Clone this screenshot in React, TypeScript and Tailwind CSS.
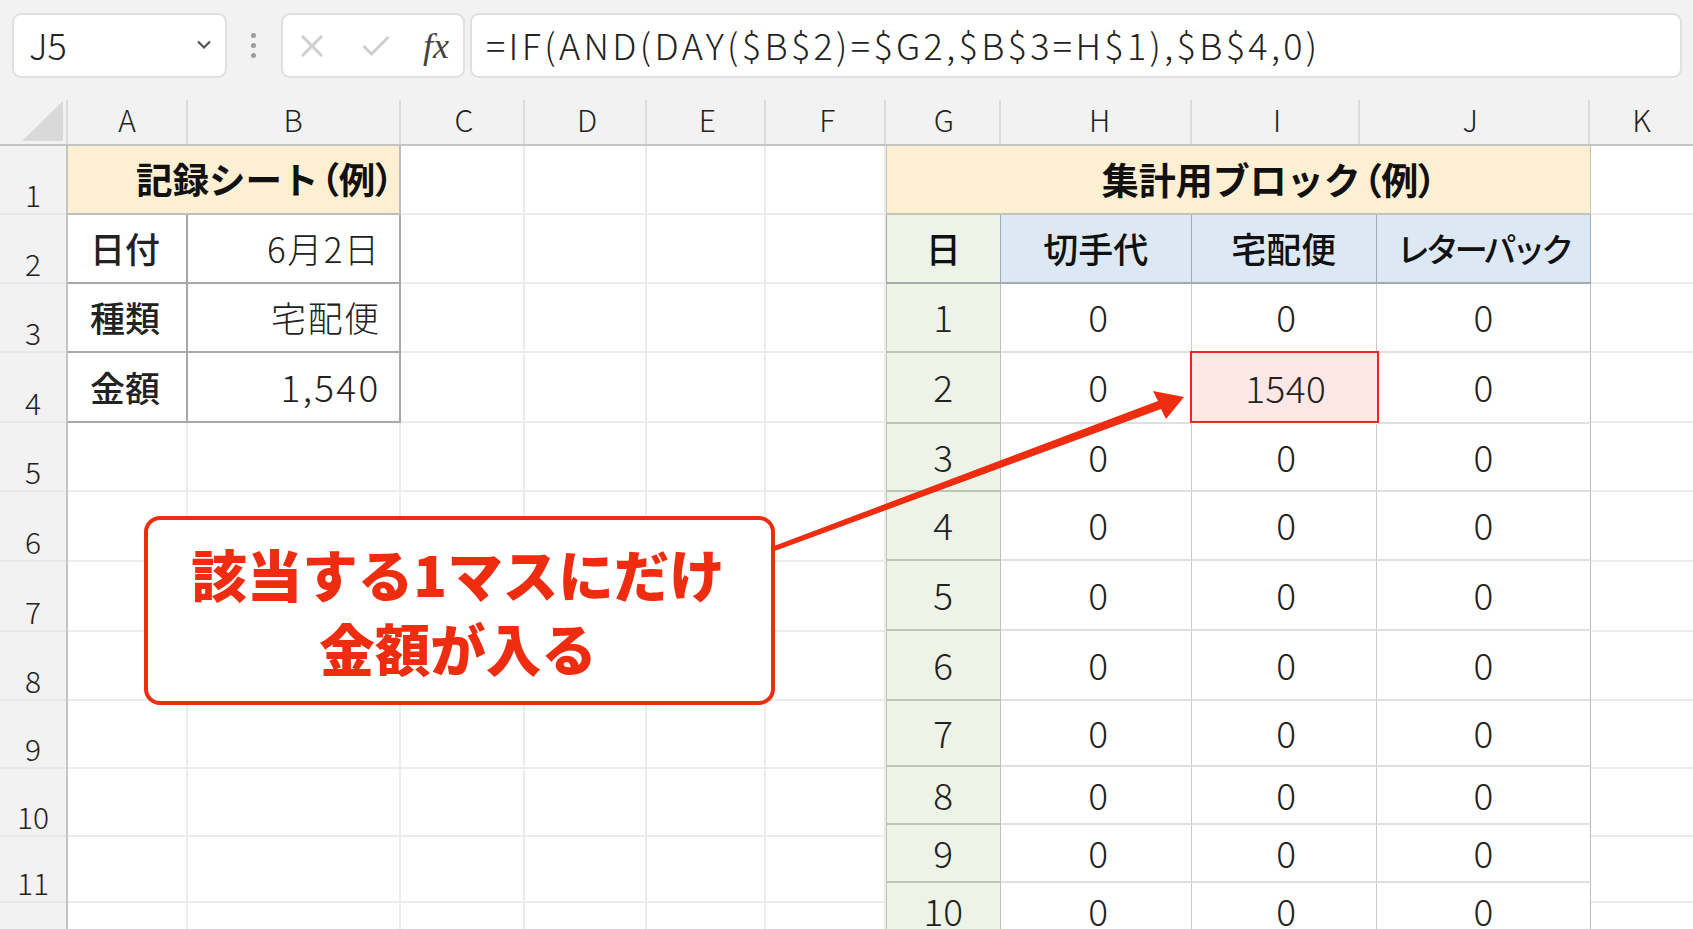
// App.tsx
// spreadsheet screenshot: formula bar, record sheet, totals block and a red callout

const columns = [
  { name: 'A', cls: 'w-[120px]' },
  { name: 'B', cls: 'w-[212.5px]' },
  { name: 'C', cls: 'w-[124px] pl-[5px]' },
  { name: 'D', cls: 'w-[122px] pl-[5px]' },
  { name: 'E', cls: 'w-[119.5px] pl-[4px]' },
  { name: 'F', cls: 'w-[119.5px] pl-[5px]' },
  { name: 'G', cls: 'w-[115.5px] pl-[3px]' },
  { name: 'H', cls: 'w-[190.5px] pl-[9px]' },
  { name: 'I', cls: 'w-[168px] pl-[5px]' },
  { name: 'J', cls: 'w-[230.5px] pr-[7px]' },
  { name: 'K', cls: 'flex-1' },
];

const rowNumbers = ['1', '2', '3', '4', '5', '6', '7', '8', '9', '10', '11', ''];
const sheetRows = 'grid-rows-[69px_69px_69px_70px_69px_69.5px_70px_69px_68.5px_67.5px_66px_60px]';
const tableRows = 'grid-rows-[69.3px_68.4px_69.6px_70.4px_68.3px_69px_70.5px_69.1px_66.4px_58px_58px_47px]';

const recordRows = [
  { label: '日付', value: '6月2日', cls: 'pr-[18px] text-[35px] tracking-[1.5px]' },
  { label: '種類', value: '宅配便', cls: 'pr-[18px] text-[35px] tracking-[1.5px]' },
  { label: '金額', value: '1,540', cls: 'pr-[18px] text-[37px] tracking-[2.3px]' },
];

const days = ['1', '2', '3', '4', '5', '6', '7', '8', '9', '10'];

function FormulaBar() {
  return (
    <div className="flex h-[100px] items-start bg-[#f2f2f2] pl-[12px] pr-[11px] pt-[13px]">
      <div className="flex h-[65px] w-[215px] items-center justify-between rounded-[9px] border-2 border-[#e0e0e0] bg-white pb-[3px] pl-[15px] pr-[14px] text-[36px] font-light text-[#222]">
        <span>J5</span>
        <svg width="14" height="9" viewBox="0 0 14 9" fill="none" stroke="#555" strokeWidth="2.2">
          <path d="M1 1.5l6 6 6-6" />
        </svg>
      </div>
      <div className="flex w-[54px] flex-col items-center gap-[5px] pr-[2px] pt-[20px]">
        <span className="h-[5px] w-[5px] rounded-full bg-[#9a9a9a]" />
        <span className="h-[5px] w-[5px] rounded-full bg-[#9a9a9a]" />
        <span className="h-[5px] w-[5px] rounded-full bg-[#9a9a9a]" />
      </div>
      <div className="flex h-[65px] w-[184px] items-center rounded-[9px] border-2 border-[#e0e0e0] bg-white pl-[17px]">
        <svg width="24" height="22" viewBox="0 0 24 22" fill="none" stroke="#cfcfcf" strokeWidth="3">
          <path d="M2 1l20 20M22 1L2 21" />
        </svg>
        <svg className="ml-[38px]" width="28" height="21" viewBox="0 0 28 21" fill="none" stroke="#cfcfcf" strokeWidth="3">
          <path d="M1.5 11l8 8L26.500 2" />
        </svg>
        <span className="ml-[33px] font-['Liberation_Serif',serif] text-[36px] italic leading-none text-[#444]">fx</span>
      </div>
      <div className="ml-[5px] flex h-[65px] flex-1 items-center rounded-[9px] border-2 border-[#e0e0e0] bg-white pb-[3px] pl-[14px] text-[36px] font-light tracking-[3.35px] text-[#222]">
        =IF(AND(DAY($B$2)=$G2,$B$3=H$1),$B$4,0)
      </div>
    </div>
  );
}

function ColumnHeader() {
  return (
    <div className="flex h-[46px] border-b-2 border-[#c4c4c4] bg-[#f2f2f2] text-[30px] font-light text-[#222]">
      <div className="flex w-[68px] items-end justify-end border-r-2 border-[#dcdcdc] pb-[3px] pr-[3px]">
        <svg width="41" height="40" viewBox="0 0 41 40">
          <path d="M0 40L41 0v40z" fill="#d9d9d9" />
        </svg>
      </div>
      {columns.map((col) => (
        <div key={col.name} className={`${col.cls} flex items-center justify-center border-r-2 border-[#dcdcdc] pb-[6px] leading-none last:border-r-0`}>
          {col.name}
        </div>
      ))}
    </div>
  );
}

function RowHeader() {
  return (
    <div className={`grid w-[68px] shrink-0 ${sheetRows} border-r-2 border-[#c4c4c4] bg-[#f2f2f2] text-[30px] font-light text-[#222]`}>
      {rowNumbers.map((n, i) => (
        <div key={i} className="flex items-end justify-center border-b-2 border-[#e8e8e8] pb-[1px] leading-[36px]">
          {n}
        </div>
      ))}
    </div>
  );
}

function BlankCells({ count }: { count: number }) {
  return (
    <>
      {Array.from({ length: count }).map((_, i) => (
        <div key={i} className="border-b-2 border-r-2 border-[#ececec]" />
      ))}
    </>
  );
}

function RecordSheet() {
  return (
    <div className={`grid w-[817.5px] shrink-0 grid-cols-[120px_212.5px_124px_122px_119.5px_119.5px] ${sheetRows} text-[35px] text-[#222]`}>
      <div className="col-span-2 flex items-center justify-end border-b-2 border-r-2 border-[#bdbdbd] bg-[#fdf0d2] pr-[5px] text-[36.5px] font-bold text-[#111]">
        記録シート<span className="ml-[2px] [font-feature-settings:'palt']">（例）</span>
      </div>
      <BlankCells count={4} />
      {recordRows.map((row) => (
        <div key={row.label} className="contents">
          <div className="flex items-center justify-center border-b-2 border-r-2 border-[#a8a8a8] pr-[4px] font-medium">{row.label}</div>
          <div className={`flex items-center justify-end border-b-2 border-r-2 border-[#a8a8a8] font-light ${row.cls}`}>{row.value}</div>
          <BlankCells count={4} />
        </div>
      ))}
      {/* empty cells under the record table */}
      <BlankCells count={48} />
    </div>
  );
}

function TotalsBlock() {
  return (
    <div className={`grid h-[784px] w-[705.5px] shrink-0 grid-cols-[115.5px_190.5px_185.5px_214px] ${tableRows} text-[35px] text-[#222]`}>
      <div className="col-span-4 flex items-center justify-center border-b-2 border-l border-r border-[#c4c4bc] bg-[#fdf0d2] pl-[62px] text-[37px] font-bold text-[#111]">
        集計用ブロック<span className="ml-[2px] [font-feature-settings:'palt']">（例）</span>
      </div>
      <div className="flex items-center justify-center border-b-2 border-l border-r border-[#a3aab0] bg-[#edf3e7] font-medium text-[#111]">日</div>
      <div className="flex items-center justify-center border-b-2 border-r border-[#a3aab0] bg-[#dde8f5] font-medium text-[#111]">切手代</div>
      <div className="flex items-center justify-center border-b-2 border-r border-[#a3aab0] bg-[#dde8f5] font-medium text-[#111]">宅配便</div>
      <div className="flex items-center justify-center border-b-2 border-r border-[#a3aab0] bg-[#dde8f5] text-[33px] font-medium tracking-[-4px] text-[#111]">レターパック</div>
      {days.map((d) => {
        // the last row is cut by the window, so it has no bottom line
        const place = d === '10' ? 'items-start pt-[12px]' : 'items-center border-b-2 pb-[2px]';
        return (
          <div key={d} className="contents">
            <div className={`flex justify-center border-l border-r border-[#bcc4b8] bg-[#edf3e7] text-[37px] font-light leading-[30px] ${place}`}>{d}</div>
            <div className={`flex justify-center border-r border-[#c9cccf] border-b-[#e0e0e0] pl-[5px] text-[37px] font-light leading-[30px] ${place}`}>0</div>
            {d === '2' ? (
              <div className="relative z-10 -mx-[2px] -mt-[2px] mb-[1px] flex items-center justify-center border-[2.5px] border-[#e8291c] bg-[#fde8e6] pl-[3px] text-[37px] font-light leading-[30px] tracking-[0.5px]">1540</div>
            ) : (
              <div className={`flex justify-center border-r border-[#c9cccf] border-b-[#e0e0e0] pl-[5px] text-[37px] font-light leading-[30px] ${place}`}>0</div>
            )}
            <div className={`flex justify-center border-r border-[#b9bdc0] border-b-[#e0e0e0] text-[37px] font-light leading-[30px] ${place}`}>0</div>
          </div>
        );
      })}
    </div>
  );
}

function LastColumn() {
  return (
    <div className={`grid flex-1 ${sheetRows}`}>
      {rowNumbers.map((_, i) => (
        <div key={i} className="border-b-2 border-[#ececec]" />
      ))}
    </div>
  );
}

function Callout() {
  return (
    <>
      <svg className="pointer-events-none absolute left-0 top-0 z-20" width="1693" height="929" viewBox="0 0 1693 929">
        <path d="M772 546.7L1158 401L1153 391L1184 397L1166 419L1161 409L774 551.3z" fill="#ee2c10" />
      </svg>
      <div className="absolute left-[144px] top-[516px] z-20 flex h-[189px] w-[631px] flex-col items-center justify-center rounded-[16px] border-4 border-[#ee2c10] bg-white pb-[2px] pr-[3px] text-[55.5px] font-black leading-[74px] text-[#ee2c10]">
        <div>該当する1マスにだけ</div>
        <div>金額が入る</div>
      </div>
    </>
  );
}

export default function App() {
  return (
    <div className="relative h-[929px] w-[1693px] overflow-hidden bg-white font-['Noto_Sans_CJK_JP','Noto_Sans',sans-serif]">
      <FormulaBar />
      <ColumnHeader />
      <div className="flex h-[783px] overflow-hidden">
        <RowHeader />
        <RecordSheet />
        <TotalsBlock />
        <LastColumn />
      </div>
      <Callout />
    </div>
  );
}
